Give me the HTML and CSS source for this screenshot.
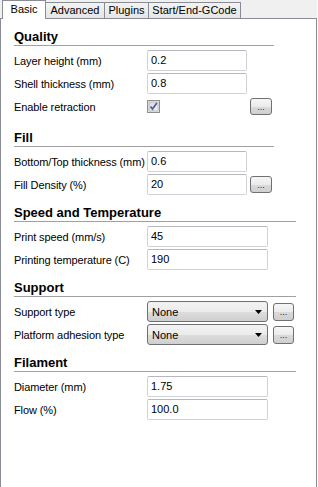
FILE: index.html
```html
<!DOCTYPE html>
<html lang="en">
<head>
  <meta charset="UTF-8">
  <title>Basic settings</title>
  <link rel="stylesheet" href="styles.css">
</head>
<body>

  <div class="tabs">
    <div class="tab active tab-basic">Basic</div>
    <div class="tab tab-advanced">Advanced</div>
    <div class="tab tab-plugins">Plugins</div>
    <div class="tab tab-gcode">Start/End-GCode</div>
  </div>

  <div class="panel">

    <div class="section quality">
      <div class="title narrow">Quality</div>
      <div class="row"><span class="label">Layer height (mm)</span><div class="field">0.2</div></div>
      <div class="row"><span class="label">Shell thickness (mm)</span><div class="field">0.8</div></div>
      <div class="row">
        <span class="label">Enable retraction</span>
        <div class="check-cell">
          <svg class="check" width="13" height="13" viewBox="0 0 13 13">
            <defs>
              <linearGradient id="cb" x1="0" y1="0" x2="1" y2="1">
                <stop offset="0" stop-color="#d8d8d8"/>
                <stop offset="1" stop-color="#f7f7f7"/>
              </linearGradient>
            </defs>
            <rect x="0.5" y="0.5" width="12" height="12" fill="#f4f4f4" stroke="#8f8f8f"/>
            <rect x="2" y="2" width="9" height="9" fill="url(#cb)" stroke="#b9b9b9" stroke-width="1"/>
            <path d="M3.5 6.5 L5.5 9 L9.8 3" fill="none" stroke="#4b5f9c" stroke-width="1.7"/>
          </svg>
        </div>
        <button class="more">...</button>
      </div>
    </div>

    <div class="section">
      <div class="title narrow">Fill</div>
      <div class="row"><span class="label">Bottom/Top thickness (mm)</span><div class="field">0.6</div></div>
      <div class="row"><span class="label">Fill Density (%)</span><div class="field">20</div><button class="more">...</button></div>
    </div>

    <div class="section">
      <div class="title wide">Speed and Temperature</div>
      <div class="row"><span class="label">Print speed (mm/s)</span><div class="field long">45</div></div>
      <div class="row"><span class="label">Printing temperature (C)</span><div class="field long">190</div></div>
    </div>

    <div class="section">
      <div class="title wide">Support</div>
      <div class="row">
        <span class="label">Support type</span>
        <div class="select"><span>None</span><svg width="7" height="4" viewBox="0 0 7 4"><path d="M0 0 H7 L3.5 4 Z" fill="#000"/></svg></div>
        <button class="more side">...</button>
      </div>
      <div class="row">
        <span class="label">Platform adhesion type</span>
        <div class="select"><span>None</span><svg width="7" height="4" viewBox="0 0 7 4"><path d="M0 0 H7 L3.5 4 Z" fill="#000"/></svg></div>
        <button class="more side">...</button>
      </div>
    </div>

    <div class="section">
      <div class="title wide">Filament</div>
      <div class="row"><span class="label">Diameter (mm)</span><div class="field long">1.75</div></div>
      <div class="row"><span class="label">Flow (%)</span><div class="field long">100.0</div></div>
    </div>

  </div>

</body>
</html>
```

FILE: styles.css
```css
body {
  margin: 0;
  font-family: "Liberation Sans", Arial, sans-serif;
  font-size: 11px;
  color: #000;
  background-color: #fff;
}

/* tab strip */
.tabs {
  display: flex;
  align-items: flex-end;
  width: 317px;
  height: 19px;
  box-sizing: border-box;
  padding-left: 2px;
  background-color: #f0f0f0;
  border-bottom: 1px solid #898c95;
}

.tab {
  height: 16px;
  box-sizing: border-box;
  border: 1px solid #898c95;
  border-bottom: none;
  background: linear-gradient(#f3f3f3, #e5e5e5);
  text-align: center;
  line-height: 15px;
  margin-left: -1px;
}

.tab.active {
  height: 19px;
  margin-bottom: -1px;
  margin-left: 0;
  background: #fff;
  line-height: 16px;
}

.tab-basic { width: 44px; }
.tab-advanced { width: 60px; }
.tab-plugins { width: 45px; }
.tab-gcode { width: 93px; }

/* settings panel */
.panel {
  width: 317px;
  height: 468px;
  box-sizing: border-box;
  border-left: 1px solid #898c95;
  border-right: 1px solid #898c95;
  padding: 10px 0 0 13px;
}

.section + .section {
  margin-top: 10px;
}

.section.quality {
  padding-bottom: 3px;
}

.title {
  font-weight: bold;
  font-size: 13px;
  line-height: 16px;
  border-bottom: 1px solid #a0a0a0;
}

.title.narrow { width: 260px; }
.title.wide { width: 282px; }

.row {
  display: flex;
  align-items: center;
  height: 21px;
  margin-top: 2px;
}

.title + .row {
  margin-top: 4px;
}

.label {
  width: 133px;
  flex: none;
  white-space: nowrap;
  letter-spacing: -0.1px;
}

.field {
  width: 100px;
  height: 21px;
  box-sizing: border-box;
  border: 1px solid #cfd2d8;
  border-top-color: #b5b8bf;
  border-radius: 2px;
  padding-left: 3px;
  line-height: 19px;
  background-color: #fff;
}

.field.long {
  width: 121px;
}

.check-cell {
  width: 100px;
  height: 13px;
}

.check {
  display: block;
}

.more {
  width: 22px;
  height: 17px;
  margin: 0 0 0 3px;
  padding: 0;
  border: 1px solid #707070;
  border-radius: 3px;
  background: linear-gradient(#f6f6f6 0%, #ebebeb 50%, #dadada 51%, #cfcfcf 100%);
  font-family: "Liberation Sans", Arial, sans-serif;
  font-size: 9px;
  line-height: 17px;
  color: #222;
}

.more.side {
  width: 21px;
  height: 18px;
  margin-left: 5px;
}

.select {
  width: 121px;
  height: 21px;
  box-sizing: border-box;
  display: flex;
  align-items: center;
  justify-content: space-between;
  padding: 0 5px 0 4px;
  border: 1px solid #707070;
  border-radius: 3px;
  background: linear-gradient(#f3f3f3 0%, #ebebeb 50%, #dddddd 51%, #cfcfcf 100%);
}
```
